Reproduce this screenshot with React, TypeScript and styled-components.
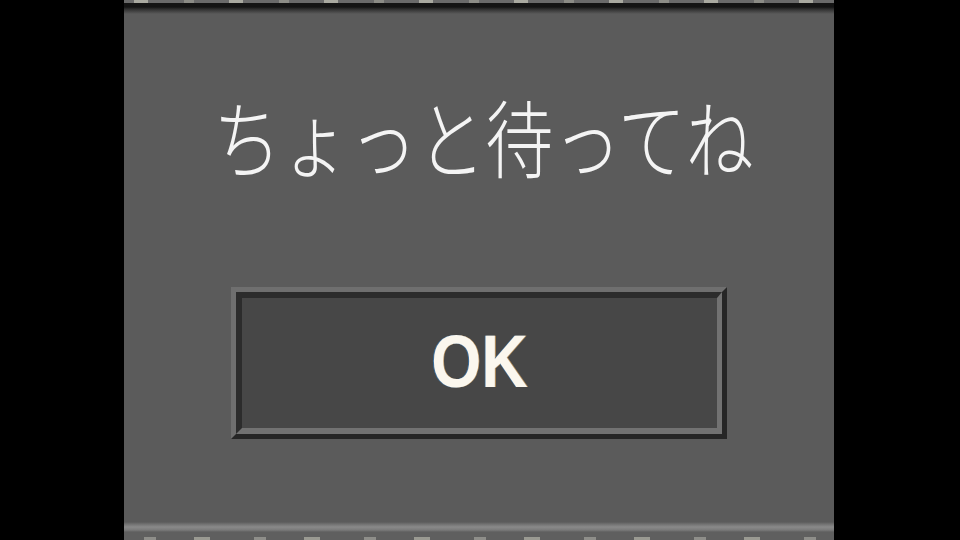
import React from "react";
import styled, { createGlobalStyle } from "styled-components";

const GlobalStyle = createGlobalStyle`
  html, body {
    margin: 0;
    padding: 0;
    background: #000;
  }
`;

const Screen = styled.div`
  width: 960px;
  height: 540px;
  background: #000;
  display: flex;
  justify-content: center;
  overflow: hidden;
`;

const Panel = styled.div`
  width: 710px;
  margin-left: -2px;
  height: 540px;
  display: flex;
  flex-direction: column;
  background: #5b5b5b;
`;

/* strip of the window above, peeking in at the top */
const TopEdge = styled.div`
  height: 14px;
  flex: none;
  background:
    repeating-linear-gradient(90deg,
      transparent 0 10px, #a9a9a0 10px 24px, transparent 24px 60px,
      #8c8c86 60px 70px, transparent 70px 95px) 0 0 / 100% 3px no-repeat,
    linear-gradient(#6a6a6a 0 3px, #141414 3px 7px, #2e2e2e 9px, #5b5b5b 14px);
`;

const Body = styled.div`
  flex: 1;
  display: flex;
  flex-direction: column;
  align-items: center;
`;

const Message = styled.div`
  margin-top: 75px;
  font-family: "Noto Sans CJK JP", "Noto Sans", sans-serif;
  font-weight: 300;
  font-size: 66px;
  line-height: 90px;
  color: #f4f4f4;
  padding-left: 8px;
  transform: scale(1.03, 1.3);
`;

const OkButton = styled.button`
  margin-top: 108px;
  width: 496px;
  height: 152px;
  padding: 0;
  background: #474747;
  border-style: solid;
  border-width: 5px;
  border-color: #6f6f6f #262626 #262626 #6f6f6f;
  display: flex;
  cursor: pointer;
`;

const ButtonFace = styled.span`
  flex: 1;
  display: flex;
  align-items: center;
  justify-content: center;
  border-style: solid;
  border-width: 6px 5px 6px 6px;
  border-color: #2c2c2c #727272 #727272 #2c2c2c;
  background: #474747;
`;

const Label = styled.span`
  font-family: "Liberation Sans", Arial, sans-serif;
  font-weight: 700;
  font-size: 74px;
  line-height: 1;
  color: #fbf7ee;
  text-shadow: -1px 0 #3d6e9c, 1px 0 #b8905c;
  transform: scaleX(0.87);
  margin-top: -2px;
`;

const BottomEdge = styled.div`
  height: 18px;
  flex: none;
  background:
    repeating-linear-gradient(90deg,
      transparent 0 20px, #8e8e8a 20px 32px, transparent 32px 70px,
      #9a9a92 70px 86px, transparent 86px 110px) 0 15px / 100% 3px no-repeat,
    linear-gradient(#5b5b5b 0, #707070 2px, #8a8a8a 5px, #7a7a7a 8px, #5f5f5f 10px, #5f5f5f 18px);
`;

export default function App() {
  return (
    <>
      <GlobalStyle />
      <Screen>
        <Panel>
          <TopEdge />
          <Body>
            <Message>ちょっと待ってね</Message>
            <OkButton>
              <ButtonFace>
                <Label>OK</Label>
              </ButtonFace>
            </OkButton>
          </Body>
          <BottomEdge />
        </Panel>
      </Screen>
    </>
  );
}
